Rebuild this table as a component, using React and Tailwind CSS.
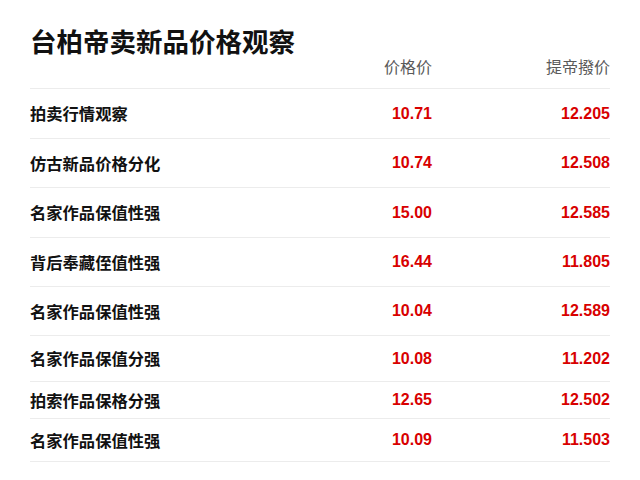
import React from "react";

const rows = [
  { label: "拍卖行情观察", a: "10.71", b: "12.205", h: "h-[50px]" },
  { label: "仿古新品价格分化", a: "10.74", b: "12.508", h: "h-[49px]" },
  { label: "名家作品保值性强", a: "15.00", b: "12.585", h: "h-[50px]" },
  { label: "背后奉藏侄值性强", a: "16.44", b: "11.805", h: "h-[49px]" },
  { label: "名家作品保值性强", a: "10.04", b: "12.589", h: "h-[49px]" },
  { label: "名家作品保值分强", a: "10.08", b: "11.202", h: "h-[46px]" },
  { label: "拍索作品保格分强", a: "12.65", b: "12.502", h: "h-[37px]" },
  { label: "名家作品保值性强", a: "10.09", b: "11.503", h: "h-[43px]" },
];

export default function App() {
  return (
    <div
      className="w-[640px] h-[480px] bg-white overflow-hidden px-[30px] pt-[25px]"
      style={{ fontFamily: '"Noto Sans CJK SC", "Liberation Sans", sans-serif' }}
    >
      <h1 className="text-[26.5px] leading-[31px] font-bold text-[#111]">
        台柏帝卖新品价格观察
      </h1>
      <div className="flex pt-[1px] pb-[13px] leading-[18px] text-[16px] text-[#5a5a5a] border-b border-[#ececec]">
        <div className="flex-1" />
        <div className="w-[100px] text-right">价格价</div>
        <div className="w-[178px] text-right">提帝撥价</div>
      </div>
      {rows.map((r, i) => (
        <div
          key={i}
          className={`flex items-center ${r.h} border-b border-[#ececec]`}
        >
          <div className="flex-1 text-[16.3px] font-bold text-[#111]">{r.label}</div>
          <div
            className="w-[100px] text-right text-[16px] font-semibold text-[#d80000]"
            style={{ fontFamily: '"Liberation Sans", sans-serif' }}
          >
            {r.a}
          </div>
          <div
            className="w-[178px] text-right text-[16px] font-semibold text-[#d80000]"
            style={{ fontFamily: '"Liberation Sans", sans-serif' }}
          >
            {r.b}
          </div>
        </div>
      ))}
    </div>
  );
}
